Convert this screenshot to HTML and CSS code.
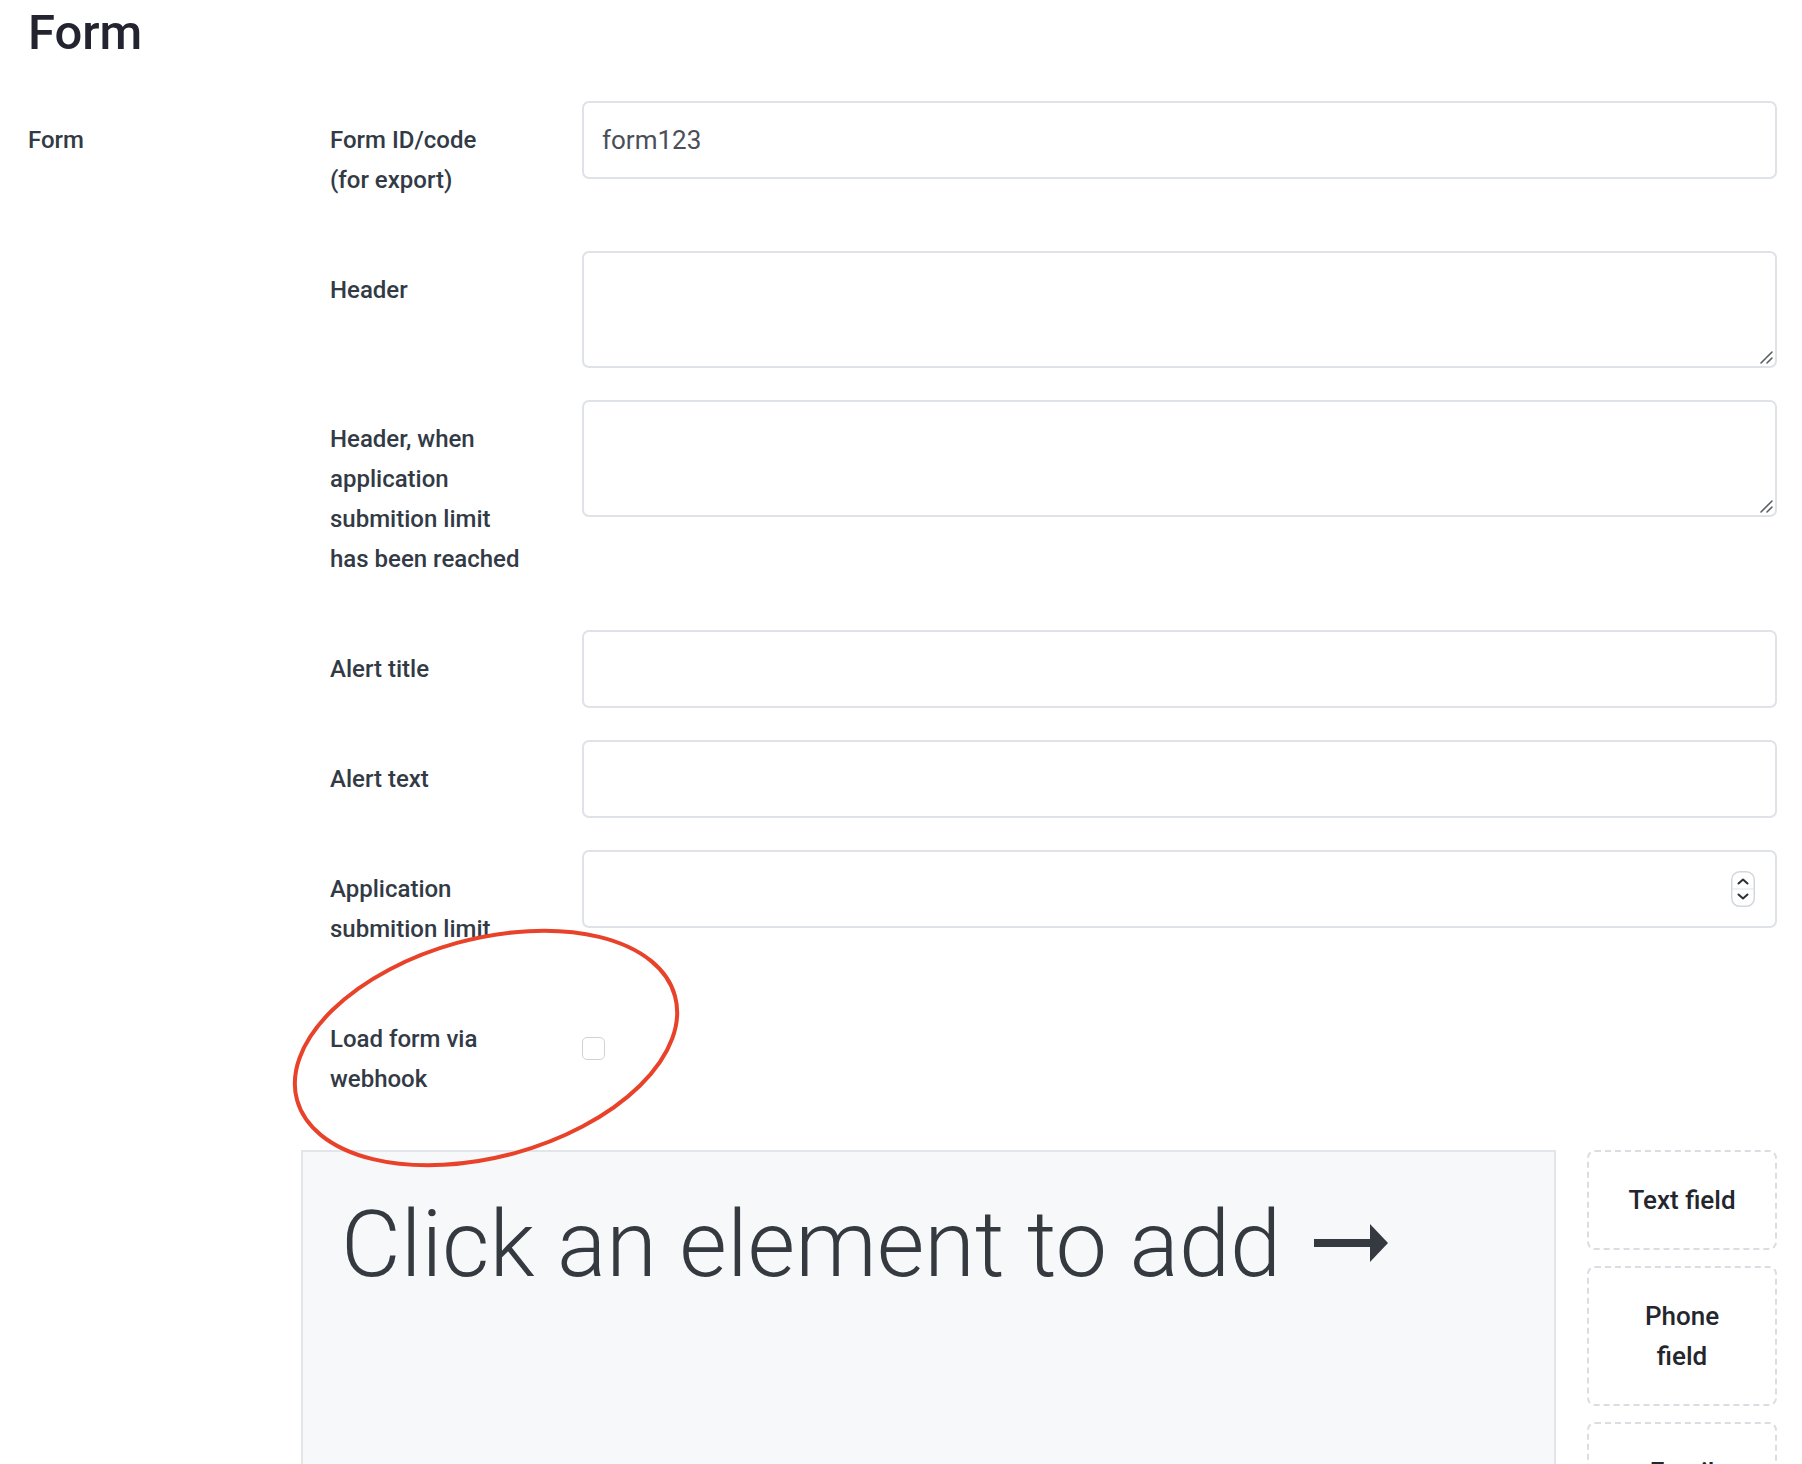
FILE: index.html
```html
<!DOCTYPE html>
<html lang="en">
<head>
<meta charset="utf-8">
<title>Form</title>
<link rel="stylesheet" href="styles.css">
</head>
<body>
<div class="page">
  <h1 class="title">Form</h1>
  <div class="section">
    <div class="section-label">Form</div>
    <div class="section-body">
      <div class="row">
        <label class="label">Form ID/code (for export)</label>
        <div class="control"><input class="input" type="text" value="form123"></div>
      </div>
      <div class="row">
        <label class="label">Header</label>
        <div class="control area-wrap">
          <textarea class="textarea"></textarea>
          <span class="grip"><svg width="14" height="14" viewBox="0 0 14 14"><path d="M2 13 L13 2 M8 13 L13 8" stroke="#5c5f63" stroke-width="1.6" stroke-linecap="round"/></svg></span>
        </div>
      </div>
      <div class="row">
        <label class="label">Header, when application submition limit has been reached</label>
        <div class="control area-wrap">
          <textarea class="textarea"></textarea>
          <span class="grip"><svg width="14" height="14" viewBox="0 0 14 14"><path d="M2 13 L13 2 M8 13 L13 8" stroke="#5c5f63" stroke-width="1.6" stroke-linecap="round"/></svg></span>
        </div>
      </div>
      <div class="row">
        <label class="label">Alert title</label>
        <div class="control"><input class="input" type="text"></div>
      </div>
      <div class="row">
        <label class="label">Alert text</label>
        <div class="control"><input class="input" type="text"></div>
      </div>
      <div class="row">
        <label class="label">Application submition limit</label>
        <div class="control number-wrap">
          <input class="input" type="text">
          <span class="spinner">
            <svg width="24" height="36" viewBox="0 0 24 36">
              <rect x="0.75" y="0.75" width="22.5" height="34.5" rx="8" fill="#fff" stroke="#d3d6db" stroke-width="1.5"/>
              <line x1="1" y1="18" x2="23" y2="18" stroke="#e1e3e6" stroke-width="1"/>
              <path d="M7.5 12.5 L12 8.5 L16.5 12.5" fill="none" stroke="#2b2f36" stroke-width="2" stroke-linecap="round" stroke-linejoin="round"/>
              <path d="M7.5 23.5 L12 27.5 L16.5 23.5" fill="none" stroke="#2b2f36" stroke-width="2" stroke-linecap="round" stroke-linejoin="round"/>
            </svg>
          </span>
        </div>
      </div>
      <div class="row">
        <label class="label">Load form via webhook</label>
        <div class="control"><input class="checkbox" type="checkbox"></div>
      </div>
      <div class="builder">
        <div class="canvas">
          <div class="hint">Click an element to add<span class="arrow"><svg width="74" height="38" viewBox="0 0 74 38"><rect x="0" y="15" width="58" height="8" fill="#343a40"/><path d="M56 0 L74 19 L56 38 Z" fill="#343a40"/></svg></span></div>
        </div>
        <div class="palette">
          <div class="tool">Text field</div>
          <div class="tool">Phone<br>field</div>
          <div class="tool">Email<br>field</div>
          <div class="tool">Text<br>area</div>
        </div>
      </div>
    </div>
  </div>
</div>
<svg class="annotation" width="1802" height="1464" viewBox="0 0 1802 1464">
  <ellipse cx="486" cy="1048" rx="196" ry="109" transform="rotate(-15.4 486 1048)" fill="none" stroke="#e8432a" stroke-width="4"/>
</svg>
</body>
</html>
```

FILE: styles.css
```css
html, body {
  margin: 0;
  padding: 0;
  background: #fff;
}

body {
  font-family: Roboto, "Liberation Sans", sans-serif;
  color: #323a46;
  position: relative;
  overflow: hidden;
  height: 1464px;
}

.page {
  padding: 4px 25px 0 28px;
}

.title {
  margin: 0;
  font-size: 49px;
  line-height: 58px;
  font-weight: 500;
  color: #23242f;
}

.section {
  display: grid;
  grid-template-columns: 273px 1fr;
  margin-top: 39px;
}

.section-label {
  font-size: 24px;
  font-weight: 500;
  line-height: 40px;
  padding-top: 19px;
}

.section-body {
  display: flex;
  flex-direction: column;
  gap: 32px;
}

.row {
  display: flex;
  align-items: flex-start;
}

.label {
  width: 281px;
  box-sizing: border-box;
  padding: 19px 62px 19px 29px;
  font-size: 24px;
  font-weight: 500;
  line-height: 40px;
  flex: none;
}

.control {
  flex: 1;
  min-width: 0;
}

.input,
.textarea {
  display: block;
  width: 100%;
  box-sizing: border-box;
  border: 2px solid #dfe2e6;
  border-radius: 7px;
  background: #fff;
  font-family: Roboto, "Liberation Sans", sans-serif;
  font-size: 26px;
  color: #4a4f57;
  outline: none;
  margin: 0;
}

.input {
  height: 78px;
  padding: 0 18px;
}

.textarea {
  height: 117px;
  padding: 12px 18px;
  resize: none;
}

.area-wrap {
  position: relative;
}

.grip {
  position: absolute;
  right: 4px;
  bottom: 4px;
  width: 14px;
  height: 14px;
  display: block;
}

.grip svg {
  display: block;
}

.number-wrap {
  position: relative;
}

.spinner {
  position: absolute;
  right: 22px;
  top: 21px;
  width: 24px;
  height: 36px;
  display: block;
}

.spinner svg {
  display: block;
}

.checkbox {
  appearance: none;
  -webkit-appearance: none;
  display: block;
  width: 23px;
  height: 23px;
  margin: 37px 0 0 0;
  box-sizing: border-box;
  border: 1.5px solid #cfd3d8;
  border-radius: 5px;
  background: #fff;
}

.builder {
  display: flex;
  gap: 31px;
  align-items: flex-start;
  margin-top: 0;
}

.canvas {
  flex: 1;
  min-height: 700px;
  box-sizing: border-box;
  background: #f7f8fa;
  border: 2px solid #e2e5e9;
  padding: 38px 40px 38px 38px;
}

.hint {
  font-size: 92px;
  font-weight: 300;
  line-height: 110px;
  color: #343a40;
  white-space: nowrap;
}

.arrow {
  display: inline-block;
  margin-left: 33px;
  vertical-align: 14px;
}

.arrow svg {
  display: block;
}

.palette {
  width: 190px;
  flex: none;
  display: flex;
  flex-direction: column;
  gap: 16px;
}

.tool {
  box-sizing: border-box;
  border: 2px dashed #dadde2;
  border-radius: 8px;
  padding: 28px 8px;
  text-align: center;
  font-size: 26px;
  font-weight: 500;
  line-height: 40px;
  color: #23262c;
}

.annotation {
  position: absolute;
  left: 0;
  top: 0;
  pointer-events: none;
}
```
